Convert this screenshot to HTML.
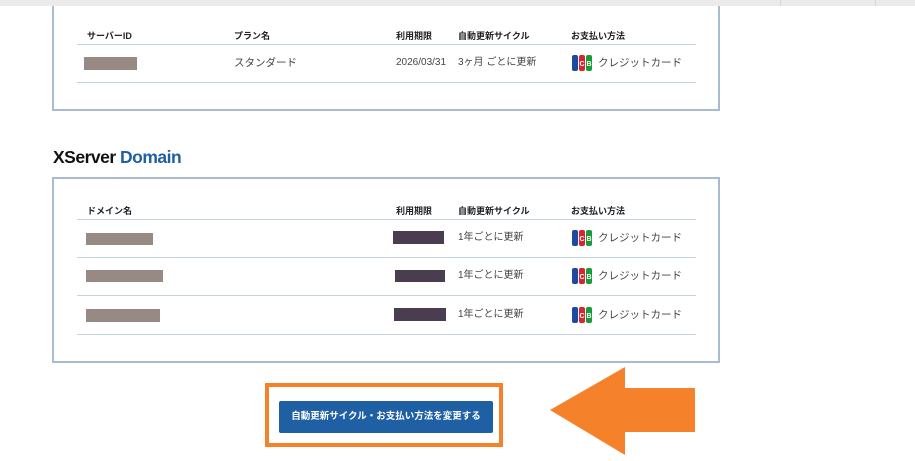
<!DOCTYPE html>
<html><head><meta charset="utf-8"><style>
*{margin:0;padding:0;box-sizing:border-box}
body{width:915px;height:461px;background:#fff;position:relative;overflow:hidden;font-family:"Liberation Sans","Noto Sans CJK JP",sans-serif;color:#333}
.a{position:absolute}
.box{position:absolute;border:2px solid #a9bccf;background:#fff}
.h{position:absolute;font-size:9px;color:#222;font-weight:bold}
.t{position:absolute;font-size:10.5px;color:#444;line-height:14px}
.ln{position:absolute;left:77px;width:619px;height:1px;background:#c5d3e0}
.g{position:absolute;background:#978a85}
.d{position:absolute;background:#4a3d4f}
.jcb{position:absolute;width:20px;height:16px;display:flex;gap:1px}
.jcb span{flex:1;border-radius:2px;color:#fff;font-size:7px;font-weight:bold;text-align:center;line-height:20px}
</style></head><body>
<div class="a" style="left:0;top:0;width:915px;height:6px;background:#ebebeb"></div>
<div class="a" style="left:780px;top:0;width:1px;height:6px;background:#d6d6d6"></div>
<div class="a" style="left:875px;top:0;width:1px;height:6px;background:#d6d6d6"></div>
<div class="box" style="left:52px;top:6px;width:668px;height:105px;border-top:none"></div>
<div class="h" style="left:87px;top:29px">サーバーID</div>
<div class="h" style="left:234px;top:29px">プラン名</div>
<div class="h" style="left:396px;top:29px">利用期限</div>
<div class="h" style="left:458px;top:29px">自動更新サイクル</div>
<div class="h" style="left:571px;top:29px">お支払い方法</div>
<div class="ln" style="top:44px"></div>
<div class="g" style="left:84px;top:57px;width:53px;height:13px"></div>
<div class="t" style="left:234px;top:56px">スタンダード</div>
<div class="t" style="left:396px;top:56px;font-size:10px">2026/03/31</div>
<div class="t" style="left:458px;top:56px;font-size:10px">3ヶ月 ごとに更新</div>
<div class="jcb" style="left:572px;top:55px"><span style="background:#1d4aa0"></span><span style="background:#d8262f">C</span><span style="background:#1a9a3a">B</span></div>
<div class="t" style="left:598px;top:56px">クレジットカード</div>
<div class="ln" style="top:82px"></div>

<div class="a" style="left:53px;top:147px;font-size:17.5px;font-weight:bold;color:#111;letter-spacing:-0.5px">XServer <span style="color:#1f5fa3">Domain</span></div>
<div class="box" style="left:52px;top:177px;width:668px;height:186px"></div>
<div class="h" style="left:87px;top:204px">ドメイン名</div>
<div class="h" style="left:396px;top:204px">利用期限</div>
<div class="h" style="left:458px;top:204px">自動更新サイクル</div>
<div class="h" style="left:571px;top:204px">お支払い方法</div>
<div class="ln" style="top:219px"></div>
<div class="g" style="left:86px;top:233px;width:67px;height:12px"></div>
<div class="d" style="left:393px;top:231px;width:51px;height:13px"></div>
<div class="t" style="left:458px;top:231px;font-size:10px">1年ごとに更新</div>
<div class="jcb" style="left:572px;top:230px"><span style="background:#1d4aa0"></span><span style="background:#d8262f">C</span><span style="background:#1a9a3a">B</span></div>
<div class="t" style="left:598px;top:231px">クレジットカード</div>
<div class="ln" style="top:257px"></div>
<div class="g" style="left:86px;top:270px;width:77px;height:12px"></div>
<div class="d" style="left:395px;top:270px;width:50px;height:12px"></div>
<div class="t" style="left:458px;top:269px;font-size:10px">1年ごとに更新</div>
<div class="jcb" style="left:572px;top:268px"><span style="background:#1d4aa0"></span><span style="background:#d8262f">C</span><span style="background:#1a9a3a">B</span></div>
<div class="t" style="left:598px;top:269px">クレジットカード</div>
<div class="ln" style="top:295px"></div>
<div class="g" style="left:86px;top:309px;width:74px;height:13px"></div>
<div class="d" style="left:394px;top:308px;width:52px;height:13px"></div>
<div class="t" style="left:458px;top:308px;font-size:10px">1年ごとに更新</div>
<div class="jcb" style="left:572px;top:307px"><span style="background:#1d4aa0"></span><span style="background:#d8262f">C</span><span style="background:#1a9a3a">B</span></div>
<div class="t" style="left:598px;top:308px">クレジットカード</div>
<div class="ln" style="top:334px"></div>

<div class="a" style="left:265px;top:383px;width:238px;height:64px;border:4px solid #f5822a"></div>
<div class="a" style="left:279px;top:401px;width:214px;height:32px;background:#1f5fa3;border-radius:2px;color:#fff;font-size:9.5px;font-weight:bold;text-align:center;line-height:32px">自動更新サイクル・お支払い方法を変更する</div>
<svg class="a" style="left:545px;top:365px" width="155" height="92"><polygon points="5,45 80,2 80,23 150,23 150,67 80,67 80,90" fill="#f5822a"/></svg>
</body></html>
